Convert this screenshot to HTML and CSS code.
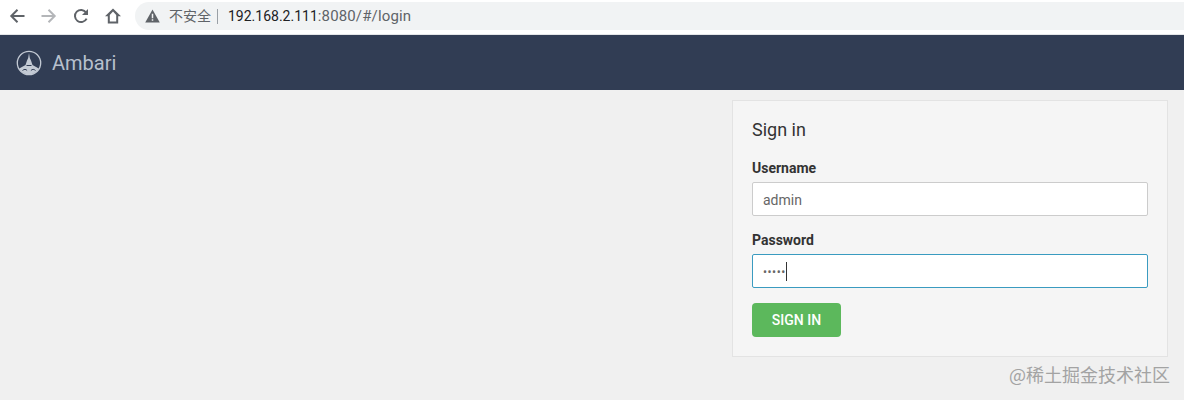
FILE: index.html
```html
<!DOCTYPE html>
<html lang="en">
<head>
    <meta charset="UTF-8">
    <meta name="viewport" content="width=device-width, initial-scale=1.0">
    <title>Ambari</title>
    <link rel="stylesheet" href="styles.css">
</head>
<body>
    <div class="browser-bar">
        <svg class="tool-icon" viewBox="0 0 16 16"><path d="M15.500 8H2.500M8.500 1.800L2.300 8l6.200 6.200" fill="none" stroke="#5f6368" stroke-width="2"/></svg>
        <svg class="tool-icon" viewBox="0 0 16 16"><path d="M.5 8h13M7.500 1.800L13.700 8l-6.200 6.200" fill="none" stroke="#b4b6b9" stroke-width="2"/></svg>
        <svg class="tool-icon" viewBox="0 0 16 16"><path d="M13.600 10.600A6.100 6.100 0 1 1 13.100 4.500" fill="none" stroke="#5f6368" stroke-width="2"/><path d="M15 .9v6H9z" fill="#5f6368"/></svg>
        <svg class="tool-icon" viewBox="0 0 16 16"><path d="M8 .5L0 8.300h2.800v7.200h10.400V8.300H16zM4.800 13.500V6.900L8 3.600l3.200 3.300v6.600z" fill="#5f6368" fill-rule="evenodd"/></svg>
        <div class="address">
            <svg class="warn-icon" viewBox="0 0 14 13"><path d="M7 0.500L13.800 12.500H0.200z" fill="#5f6368"/><path d="M6.300 4.500h1.400v4.200H6.300zM6.300 9.600h1.400v1.400H6.300z" fill="#f1f3f4"/></svg>
            <span class="insecure">不安全</span>
            <span class="divider"></span>
            <span class="host">192.168.2.111</span><span class="url-rest">:8080/#/login</span>
        </div>
    </div>

    <nav class="navbar">
        <svg class="logo" viewBox="0 0 26 26">
            <circle cx="13" cy="13" r="11.700" fill="none" stroke="#c3cad4" stroke-width="1.300"/>
            <path d="M13 3l.8 5 1.200 2.500 1.500 4.500 6.300 3.500c-1.700 3.500-5.500 6-9.800 6s-8.100-2.500-9.800-6l6.300-3.500 1.500-4.500 1.200-2.500z" fill="#c3cad4"/>
            <path d="M6.500 20.500c1.800-1.500 3.300-1.500 4.600 0M14.900 20.500c1.500-1.500 3-1.500 4.600 0M10.500 15.500h5" fill="none" stroke="#313d54" stroke-width="1"/>
        </svg>
        <span class="brand">Ambari</span>
    </nav>

    <main class="content">
        <form class="login-card">
            <h2 class="card-title">Sign in</h2>
            <div class="form-group">
                <label class="form-label">Username</label>
                <div class="form-control">admin</div>
            </div>
            <div class="form-group group-last">
                <label class="form-label">Password</label>
                <div class="form-control focused"><span class="dots">•••••</span><span class="caret"></span></div>
            </div>
            <button type="button" class="btn-signin">SIGN IN</button>
        </form>
    </main>

    <div class="watermark">@稀土掘金技术社区</div>
</body>
</html>
```

FILE: styles.css
```css
html, body {
    height: 100%;
}
body {
    margin: 0;
    background: #f0f0f0;
    font-family: Roboto, 'Liberation Sans', sans-serif;
    overflow: hidden;
    position: relative;
}
.browser-bar {
    display: flex;
    align-items: flex-start;
    height: 34px;
    background: #ffffff;
    border-bottom: 1px solid #e4e6e8;
    padding-left: 9px;
}
.tool-icon {
    width: 16px;
    height: 16px;
    margin: 8px 16px 0 0;
    flex: none;
}
.address {
    display: flex;
    align-items: center;
    height: 28px;
    flex: 1;
    margin: 2px 0 0 -2px;
    padding-left: 10px;
    background: #f1f3f4;
    border-radius: 14px 0 0 14px;
    font-size: 14px;
}
.warn-icon {
    width: 15px;
    height: 14px;
    margin-right: 9px;
}
.insecure {
    font-family: 'Noto Sans CJK SC', sans-serif;
    font-size: 14px;
    color: #5f6368;
    margin-bottom: 3px;
}
.divider {
    width: 1px;
    height: 15px;
    background: #9aa0a6;
    margin: 0 10px 0 6px;
}
.host {
    color: #202124;
}
.url-rest {
    font-size: 15px;
    letter-spacing: 0.15px;
    color: #5f6368;
}
.navbar {
    display: flex;
    align-items: center;
    height: 55px;
    background: #313d54;
    padding-left: 16px;
}
.logo {
    width: 26px;
    height: 26px;
    margin-right: 10px;
}
.brand {
    font-size: 20px;
    color: #b7c0cd;
}
.content {
    display: flex;
    justify-content: flex-end;
    padding: 10px 16px 0 0;
}
.login-card {
    width: 436px;
    height: 257px;
    box-sizing: border-box;
    background: #f5f5f5;
    border: 1px solid #e3e3e3;
    padding: 18px 19px 19px;
}
.card-title {
    margin: 0 0 17px;
    font-size: 18px;
    line-height: 22px;
    font-weight: 400;
    color: #333333;
}
.form-group {
    margin-bottom: 14px;
}
.group-last {
    margin-bottom: 15px;
}
.form-label {
    display: block;
    font-size: 14px;
    line-height: 20px;
    font-weight: 700;
    color: #333333;
    margin-bottom: 4px;
}
.form-control {
    display: flex;
    align-items: center;
    height: 34px;
    box-sizing: border-box;
    background: #ffffff;
    border: 1px solid #cccccc;
    border-radius: 2px;
    padding: 1px 10px 0;
    font-size: 14px;
    color: #666666;
}
.focused {
    border-color: #3a9bc0;
}
.dots {
    font-size: 12px;
    letter-spacing: 0.5px;
}
.caret {
    width: 1px;
    height: 19px;
    background: #333333;
}
.btn-signin {
    display: block;
    width: 89px;
    height: 34px;
    background: #5cb85c;
    border: none;
    border-radius: 4px;
    font-family: inherit;
    font-size: 14px;
    font-weight: 500;
    color: #ffffff;
    padding: 0;
}
.watermark {
    position: absolute;
    right: 14px;
    top: 363px;
    font-family: 'Noto Sans CJK SC', sans-serif;
    font-size: 18px;
    line-height: 22px;
    color: #a3a3a3;
    white-space: nowrap;
}
```
